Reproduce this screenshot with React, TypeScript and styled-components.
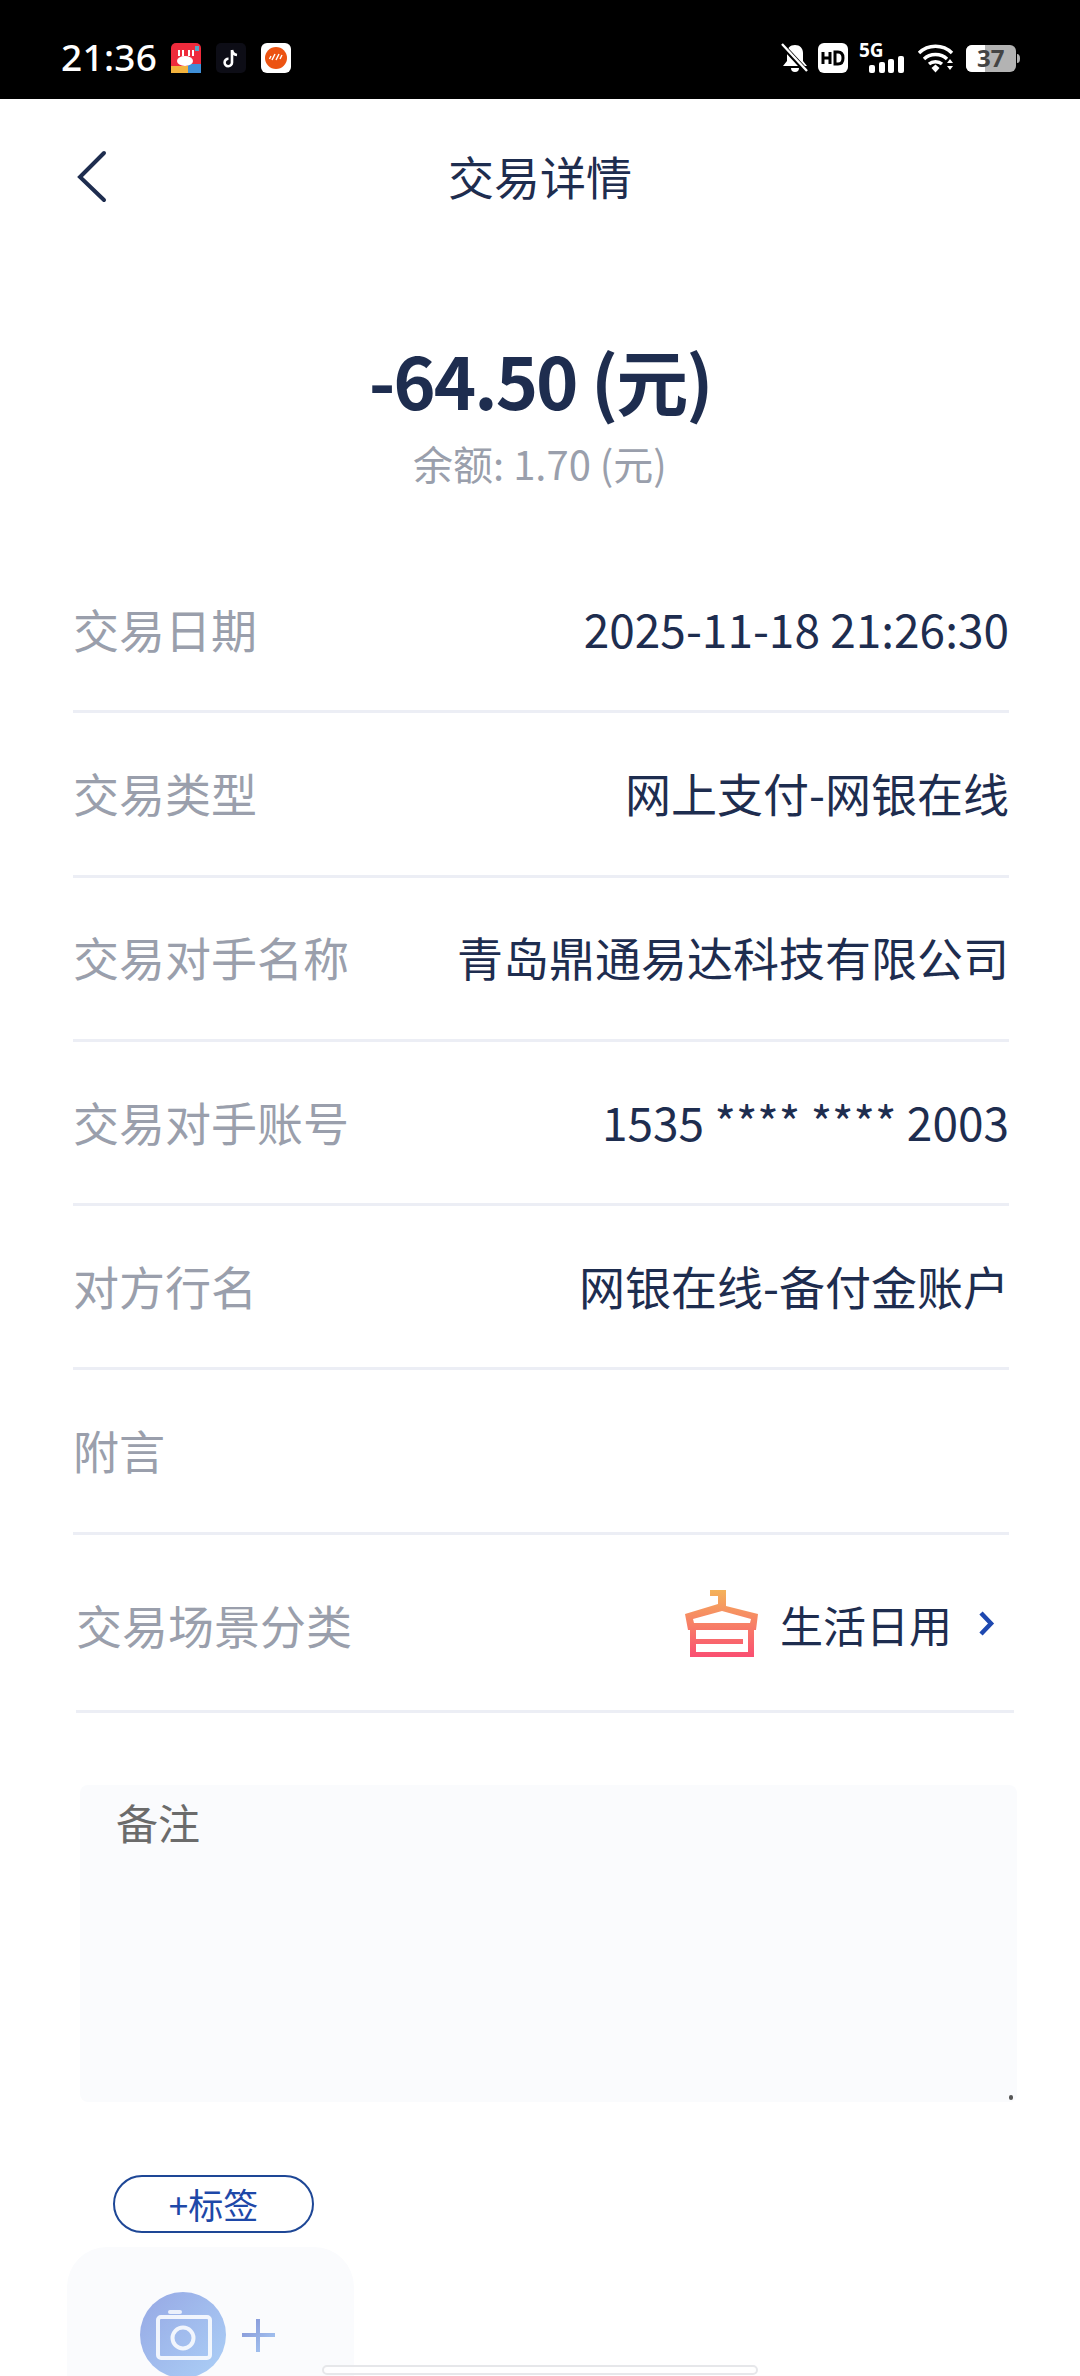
import styled, { createGlobalStyle } from 'styled-components';

const GlobalStyle = createGlobalStyle`
  html, body {
    margin: 0;
    padding: 0;
    background: #fff;
  }
  * {
    box-sizing: border-box;
  }
`;

const Page = styled.div`
  position: relative;
  width: 1080px;
  height: 2376px;
  overflow: hidden;
  background: #fff;
  color: #1e2d4f;
  font-family: 'Noto Sans CJK SC', 'Noto Sans', sans-serif;
`;

const StatusBar = styled.div`
  height: 99px;
  background: #000;
  display: flex;
  align-items: center;
  justify-content: space-between;
  padding: 17px 60px 0 61px;
`;

const StatusGroup = styled.div`
  display: flex;
  align-items: center;
`;

const Clock = styled.span`
  color: #fff;
  font-family: 'Noto Sans', sans-serif;
  font-size: 37px;
  font-weight: 500;
  line-height: 44px;
  width: 110px;
  margin-top: -2px;
  letter-spacing: 0.3px;
`;

const NotifyIcon = styled.svg`
  width: 30px;
  height: 30px;
  margin-right: 15px;
  display: block;
`;

const StatusIcon = styled.svg<{ $gap: number }>`
  display: block;
  overflow: visible;
  margin-left: ${(p) => p.$gap}px;
`;

const Header = styled.div`
  height: 156px;
  display: flex;
  align-items: center;
  justify-content: center;
  position: relative;
`;

const BackIcon = styled.svg`
  position: absolute;
  left: 74px;
  top: 50px;
  width: 36px;
  height: 56px;
`;

const Title = styled.h1`
  margin: -4px 0 0;
  font-size: 46px;
  font-weight: 400;
  line-height: 60px;
  color: #1e2d4f;
`;

const Summary = styled.div`
  padding-top: 85px;
  display: flex;
  flex-direction: column;
  align-items: center;
`;

const Amount = styled.div`
  font-size: 72px;
  font-weight: 700;
  line-height: 78px;
  letter-spacing: -2px;
  color: #1e2d4f;
`;

const Balance = styled.div`
  font-size: 40px;
  line-height: 50px;
  margin-top: 20px;
  color: #9a9fac;
`;

const InfoList = styled.div`
  margin-top: 61px;
  padding: 0 71px 0 73px;
`;

const InfoRow = styled.div`
  height: 164.3px;
  padding-bottom: 4px;
  display: flex;
  align-items: center;
  justify-content: space-between;
  border-bottom: 3px solid #eceef5;
`;

const Label = styled.span`
  font-size: 46px;
  color: #9a9fac;
`;

const Value = styled.span<{ $small?: boolean }>`
  font-size: ${(p) => (p.$small ? 43 : 46)}px;
  color: #1e2d4f;
`;

const SceneRow = styled.div`
  height: 178px;
  margin: 0 66px 0 76px;
  padding-top: 3px;
  display: flex;
  align-items: center;
  justify-content: space-between;
  border-bottom: 3px solid #eceef5;
`;

const SceneValue = styled.div`
  display: flex;
  align-items: center;
`;

const SceneIcon = styled.svg`
  width: 74px;
  height: 68px;
  margin-right: 21px;
  display: block;
`;

const Chevron = styled.svg`
  width: 16px;
  height: 25px;
  margin: 0 19px 0 27px;
  display: block;
`;

const NoteBox = styled.div`
  position: relative;
  margin: 72px 0 0 80px;
  width: 937px;
  height: 317px;
  border-radius: 8px;
  background: #fafbfd;
  padding: 9px 36px;
  font-size: 42px;
  line-height: 56px;
  color: #6b6b6b;
`;

const ResizeDot = styled.span`
  position: absolute;
  right: 4px;
  bottom: 2px;
  width: 4px;
  height: 5px;
  border-radius: 2px;
  background: #555;
`;

const TagButton = styled.div`
  margin: 73px 0 0 113px;
  width: 201px;
  height: 58px;
  border: 2px solid #1e4796;
  border-radius: 29px;
  display: flex;
  align-items: center;
  justify-content: center;
  font-size: 35px;
  color: #1e48a8;
`;

const UploadCard = styled.div`
  margin: 14px 0 0 67px;
  width: 287px;
  height: 300px;
  border-radius: 40px;
  background: #fafbfd;
  padding: 45px 5px 0 0;
  display: flex;
  justify-content: center;
  align-items: flex-start;
`;

const CameraIcon = styled.svg`
  width: 136px;
  height: 88px;
  display: block;
`;

const HomeBar = styled.div`
  position: absolute;
  left: 322px;
  top: 2365px;
  width: 436px;
  height: 10px;
  border-radius: 5px;
  background: rgba(255, 255, 255, 0.7);
  border: 2px solid #e6e7ea;
`;

const rows = [
  { label: '交易日期', value: '2025-11-18 21:26:30' },
  { label: '交易类型', value: '网上支付-网银在线' },
  { label: '交易对手名称', value: '青岛鼎通易达科技有限公司' },
  { label: '交易对手账号', value: '1535 **** **** 2003' },
  { label: '对方行名', value: '网银在线-备付金账户' },
  { label: '附言', value: '' },
];

function App() {
  return (
    <Page>
      <GlobalStyle />
      <StatusBar>
        <StatusGroup>
          <Clock>21:36</Clock>
          <NotifyIcon viewBox="0 0 30 30">
            <rect width="30" height="30" rx="5" fill="#ee2b3c" />
            <rect y="23" width="30" height="7" fill="#f3b33d" />
            <rect x="17" y="21" width="13" height="9" fill="#3f8fd8" />
            <ellipse cx="14" cy="18" rx="8" ry="5" fill="#fff" />
            <path d="M8 7v6M12 7v6M18 7v6M22 7v6" stroke="#fff" strokeWidth="2" />
            <rect x="24" y="3" width="4" height="5" fill="#56a7c9" />
          </NotifyIcon>
          <NotifyIcon viewBox="0 0 30 30">
            <rect width="30" height="30" rx="5" fill="#0d0d16" />
            <path
              d="M16 7v12.5a3.7 3.7 0 1 1-3.5-3.7M16 7c.5 3 2.4 4.6 5 5"
              fill="none"
              stroke="#fff"
              strokeWidth="2.6"
            />
          </NotifyIcon>
          <NotifyIcon viewBox="0 0 30 30">
            <rect width="30" height="30" rx="6" fill="#fff" />
            <circle cx="15" cy="15" r="11" fill="#ec5312" />
            <path d="M10 13l-1.5 3M14 11l-3 6M18 11l-3 6M21 12l-2 4" stroke="#fff" strokeWidth="1.4" />
          </NotifyIcon>
        </StatusGroup>
        <StatusGroup>
          <StatusIcon $gap={0} width="28" height="30" viewBox="0 0 28 30">
            <path d="M14 2c-5 0-8 3.500-8 8v8l-4 5h24l-4-5v-8c0-4.500-3-8-8-8zM10 25a4 4 0 0 0 8 0z" fill="#fff" />
            <path d="M1 2l25 27" stroke="#000" strokeWidth="5" />
            <path d="M1 1l25 27" stroke="#fff" strokeWidth="2.400" />
          </StatusIcon>
          <StatusIcon $gap={9} width="30" height="30" viewBox="0 0 30 30">
            <rect width="30" height="30" rx="6" fill="#fff" />
            <path d="M5 9v12M12 9v12M5 15h7" stroke="#000" strokeWidth="3" />
            <path d="M17 9v12h3c3 0 5-2 5-6s-2-6-5-6z" fill="none" stroke="#000" strokeWidth="3" />
          </StatusIcon>
          <StatusIcon $gap={11} width="45" height="30" viewBox="0 0 45 30">
            <text x="0" y="14" fill="#fff" fontSize="19" fontWeight="700" fontFamily="Noto Sans">
              5G
            </text>
            <rect x="10" y="22" width="6" height="8" rx="2" fill="#fff" />
            <rect x="20" y="19" width="6" height="11" rx="2" fill="#fff" />
            <rect x="29" y="16" width="6" height="14" rx="2" fill="#fff" />
            <rect x="39" y="13" width="6" height="17" rx="2" fill="#fff" />
          </StatusIcon>
          <StatusIcon $gap={13} width="38" height="30" viewBox="0 0 38 30">
            <path
              d="M2 10c9-9 24-9 33 0M7 16c6-6 17-6 23 0M12 21c3.500-3 9.500-3 13 0"
              fill="none"
              stroke="#fff"
              strokeWidth="3.400"
            />
            <path d="M14.500 25l4-3.500 4 3.500-4 4.500z" fill="#fff" />
            <path d="M30 20l3-4 3 4zM30 23l3 4 3-4z" fill="#fff" />
          </StatusIcon>
          <StatusIcon $gap={11} width="54" height="27" viewBox="0 0 54 27">
            <rect x="0" y="0" width="50" height="27" rx="6" fill="#b3b3b3" />
            <path d="M6 0h13v27H6a6 6 0 0 1-6-6V6a6 6 0 0 1 6-6z" fill="#fff" />
            <path d="M51 9c2 0 3 1.500 3 4.500s-1 4.500-3 4.500z" fill="#b3b3b3" />
            <text x="11" y="22" fill="#444" fontSize="24" fontWeight="700" fontFamily="Noto Sans">
              37
            </text>
          </StatusIcon>
        </StatusGroup>
      </StatusBar>

      <Header>
        <BackIcon viewBox="0 0 36 56">
          <path d="M30 4L6 28l24 23" fill="none" stroke="#1e2d4f" strokeWidth="4" strokeLinecap="round" />
        </BackIcon>
        <Title>交易详情</Title>
      </Header>

      <Summary>
        <Amount>-64.50 (元)</Amount>
        <Balance>余额: 1.70 (元)</Balance>
      </Summary>

      <InfoList>
        {rows.map((row) => (
          <InfoRow key={row.label}>
            <Label>{row.label}</Label>
            <Value>{row.value}</Value>
          </InfoRow>
        ))}
      </InfoList>

      <SceneRow>
        <Label>交易场景分类</Label>
        <SceneValue>
          <SceneIcon viewBox="0 0 74 68">
            <defs>
              <linearGradient id="hanger" x1="0" y1="0" x2="0" y2="1">
                <stop offset="0" stopColor="#f4b25a" />
                <stop offset="1" stopColor="#fa4f72" />
              </linearGradient>
            </defs>
            <path
              fill="url(#hanger)"
              fillRule="evenodd"
              d="M25 0H41V16L73 24L71 40H69V67H5V40H3L0 24L33 14V6H25ZM37 21L8 29L9 33H65L66 29ZM11 40H63V62H11V54H58V49H11Z"
            />
          </SceneIcon>
          <Value $small>生活日用</Value>
          <Chevron viewBox="0 0 16 25">
            <path d="M2 2l10 10.500L2 23" fill="none" stroke="#1e48b0" strokeWidth="4.500" />
          </Chevron>
        </SceneValue>
      </SceneRow>

      <NoteBox>
        备注
        <ResizeDot />
      </NoteBox>

      <TagButton>+标签</TagButton>

      <UploadCard>
        <CameraIcon viewBox="0 0 136 88">
          <defs>
            <linearGradient id="lens" x1="0" y1="0" x2="1" y2="1">
              <stop offset="0" stopColor="#96a8e4" />
              <stop offset="1" stopColor="#acd0f7" />
            </linearGradient>
            <linearGradient id="plus" x1="0" y1="0" x2="1" y2="1">
              <stop offset="0" stopColor="#8391d4" />
              <stop offset="1" stopColor="#a9cdf6" />
            </linearGradient>
          </defs>
          <circle cx="43" cy="43" r="43" fill="url(#lens)" />
          <rect
            x="18"
            y="25"
            width="52"
            height="41"
            rx="3"
            fill="none"
            stroke="#fff"
            strokeOpacity="0.85"
            strokeWidth="4"
          />
          <rect x="28" y="18" width="14" height="4" rx="2" fill="#fff" fillOpacity="0.8" />
          <circle cx="43" cy="46" r="10.500" fill="none" stroke="#fff" strokeOpacity="0.85" strokeWidth="4" />
          <path d="M102 43h33M118 27v33" stroke="url(#plus)" strokeWidth="4" />
        </CameraIcon>
      </UploadCard>

      <HomeBar />
    </Page>
  );
}

export default App;
